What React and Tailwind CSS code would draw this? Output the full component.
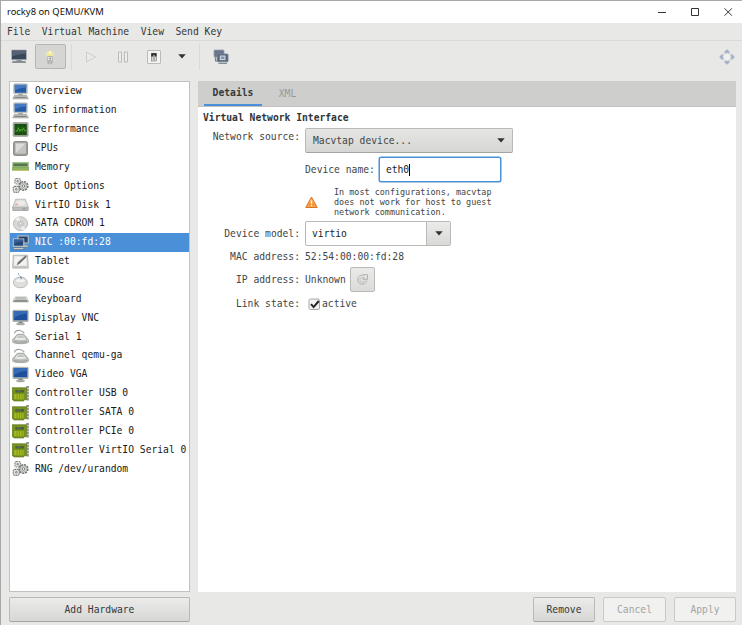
import React, { useState } from 'react';

function Svg({ className = 'h-[17px] w-[17px]', box = '0 0 17 17', children }) {
  return (
    <svg viewBox={box} className={`shrink-0 ${className}`} fill="none">
      {children}
    </svg>
  );
}

function ComputerIcon() {
  return (
    <Svg>
      <rect x="1.800" y="0.900" width="13.400" height="9.900" rx="0.7" fill="#d8dad6" stroke="#94968f" strokeWidth="0.6" />
      <rect x="2.700" y="1.800" width="11.600" height="8" fill="#255aa8" />
      <path d="M2.700 1.800h11.600v2.700C9 4.500 5.500 6 2.700 7.500z" fill="#4679c1" />
      <path d="M6.200 10.800h4.600v1.700H6.200z" fill="#a3a7a1" />
      <path d="M2.300 12.500h12.400l1.600 3.400H.8z" fill="#c9cbc6" stroke="#8d908a" strokeWidth="0.6" />
      <path d="M2.500 14.300h12" stroke="#696d67" strokeWidth="0.9" />
    </Svg>
  );
}

function DisplayIcon() {
  return (
    <Svg>
      <rect x="0.800" y="1.200" width="15.400" height="11.300" rx="0.8" fill="#b9bdb8" stroke="#858982" strokeWidth="0.5" />
      <rect x="1.700" y="2.100" width="13.600" height="9.200" fill="#1f4f9c" />
      <path d="M1.700 2.100h13.600v3C9 5 5 7 1.700 9.500z" fill="#376ab4" />
      <path d="M6.800 12.500h3.600l.6 2H6.200z" fill="#888d87" />
      <ellipse cx="8.500" cy="14.900" rx="4.200" ry="1" fill="#b2b6b0" stroke="#777b75" strokeWidth="0.4" />
    </Svg>
  );
}

function PerformanceIcon() {
  return (
    <Svg>
      <rect x="1.200" y="1.700" width="14.800" height="13.600" rx="0.6" fill="#bdbfb9" stroke="#80837b" strokeWidth="0.7" />
      <rect x="2.400" y="2.800" width="12.400" height="11.400" fill="#194d12" />
      <path d="M2.400 6.500h12.400M2.400 10.500h12.400M6 3v11M10.500 3v11" stroke="#2c6b20" strokeWidth="0.5" />
      <path d="M3.500 10h1.700l1.200-3.200 1.300 3.600 1.300-2.400 1.200 1.700 1.400-2.700 1 2.700h1.400" stroke="#55b52d" strokeWidth="0.9" />
    </Svg>
  );
}

function CpuIcon() {
  return (
    <Svg>
      <rect x="1.500" y="1.500" width="14" height="14" rx="1.800" fill="#9b9e98" stroke="#7d807a" strokeWidth="0.8" />
      <rect x="2.600" y="2.300" width="11.800" height="11.900" rx="1" fill="#c2c4c0" stroke="#8c8f89" strokeWidth="0.6" />
      <path d="M4 12.700V3.800h9z" fill="#dcdddb" />
    </Svg>
  );
}

function MemoryIcon() {
  return (
    <Svg>
      <path d="M.5 4.200h16v4.500H.5z" fill="#6f9d57" />
      <path d="M.5 4.200h16v1H.5z" fill="#a4c48c" />
      <path d="M1.800 5.900h13.400v2H1.800z" fill="#55724b" />
      <path d="M.3 9h16.400v3.400H.3z" fill="#8fb55f" stroke="#5b7d43" strokeWidth="0.4" />
      <path d="M.8 12.400h15.400" stroke="#cbc66e" strokeWidth="0.9" />
    </Svg>
  );
}

function GearsIcon() {
  return (
    <Svg>
      <g fill="#e2e3e0">
        <rect x="3" y="1.500" width="5.500" height="5.500" rx="1.400" stroke="#898c87" strokeWidth="1.200" strokeDasharray="1.600 0.6" />
        <rect x="1.300" y="9.300" width="6" height="6" rx="1.500" stroke="#7b7e79" strokeWidth="1.200" strokeDasharray="1.600 0.6" />
        <circle cx="11.500" cy="9" r="4.300" stroke="#6f736e" strokeWidth="1.600" strokeDasharray="2 0.9" />
        <circle cx="11.500" cy="9" r="3" stroke="#a0a39e" strokeWidth="0.8" />
      </g>
      <g stroke="#5d615c" fill="#fff" strokeWidth="0.8">
        <circle cx="11.500" cy="9" r="1.300" />
        <circle cx="5.700" cy="4.200" r="0.7" />
        <circle cx="4.300" cy="12.300" r="0.8" />
      </g>
    </Svg>
  );
}

function DiskIcon() {
  return (
    <Svg>
      <path d="M3.700 3.200h9.600l2.900 7.300v4H.8v-4z" fill="#dddddb" stroke="#aaaba8" strokeWidth="0.7" />
      <path d="M1 11.200h15v3.200H1z" fill="#bebfbc" stroke="#999b97" strokeWidth="0.5" />
      <ellipse cx="8.700" cy="7" rx="4.600" ry="2.600" fill="#ececea" />
      <path d="M3.200 9.300 6 7.800" stroke="#e2a297" strokeWidth="1.200" />
      <path d="M10 12.900h4.500" stroke="#878a85" strokeWidth="0.7" />
    </Svg>
  );
}

function CdromIcon() {
  return (
    <Svg>
      <circle cx="8.500" cy="8.700" r="7" fill="#d8d9d7" stroke="#adafac" strokeWidth="0.8" />
      <path d="M8.500 8.700 3.200 4a7 7 0 0 1 4-2.300zM8.500 8.700l5.200 4.800a7 7 0 0 1-4 2.100z" fill="#efefee" />
      <circle cx="8.500" cy="8.700" r="2.700" fill="#dededd" stroke="#aaacaa" strokeWidth="0.7" />
      <circle cx="8.500" cy="8.700" r="1.100" fill="#fff" stroke="#999b98" strokeWidth="0.5" />
    </Svg>
  );
}

function NetworkIcon() {
  return (
    <Svg>
      <path d="M8 11h7.500l1 2H9z" fill="#c5c7c2" stroke="#767e80" strokeWidth="0.5" />
      <rect x="6" y="2" width="10.200" height="7" fill="#22436f" stroke="#c4c8c6" strokeWidth="1" />
      <rect x="1.300" y="5" width="10.500" height="7.200" fill="#244878" stroke="#cbcdc8" strokeWidth="1" />
      <path d="M1.900 5.600h9.300v2C7 7.500 4 9 1.900 10.500z" fill="#386291" />
      <path d="M1.800 13.500h9.500l.9 2H.9z" fill="#cbccc7" stroke="#566775" strokeWidth="0.6" />
    </Svg>
  );
}

function TabletIcon() {
  return (
    <Svg>
      <path d="M1.200 2.200h14.400l.7 12.900H.7z" fill="#d9dad7" stroke="#aaaba7" strokeWidth="0.8" />
      <path d="M2.400 3.400h12v9.200H2.200z" fill="#f3f3f2" />
      <path d="m4.500 12.200 1.500-3 7.500-6.700 1.300 1.200-7.200 7z" fill="#696c68" />
      <path d="m6 9.200 7.500-6.700" stroke="#a7aaa6" strokeWidth="0.7" />
      <path d="M2 14h13" stroke="#b0b1ad" strokeWidth="0.9" />
    </Svg>
  );
}

function MouseIcon() {
  return (
    <Svg>
      <path d="M9 6C9 3 5.500 4 6.500 1" stroke="#a2a9b1" strokeWidth="0.9" />
      <path d="M1.500 10.500C1.500 7 4.300 5.200 8.300 5.200s6.900 1.900 6.900 5.300c0 3.300-2.600 5.200-6.800 5.200s-6.900-1.900-6.900-5.200z" fill="#dfdfdd" stroke="#a9aba7" strokeWidth="0.8" />
      <path d="M3.500 8.500C5 6.700 11.500 6.700 13 8.500c-1 2-8.500 2-9.500 0z" fill="#f5f5f4" />
      <path d="M7.700 4.500 9.500 4l.7 2.600-1.500 1z" fill="#8da5c5" />
    </Svg>
  );
}

function KeyboardIcon() {
  return (
    <Svg>
      <path d="M3.200 6.700h11.300l1.900 4H.9z" fill="#d4d5d2" stroke="#c2c4bf" strokeWidth="0.5" />
      <path d="M4 7.800h9.500M3.500 9h10.700" stroke="#a5a8a2" strokeWidth="0.8" strokeDasharray="2 0.2" />
      <path d="M.8 10.600h15.800v1.700H.8z" fill="#a1a49f" />
      <path d="M2.500 10.800h12.500" stroke="#696e68" strokeWidth="0.9" />
    </Svg>
  );
}

function SerialIcon() {
  return (
    <Svg>
      <path d="M2.500 5.500c.2-2.500 2.500-3.200 5-3 2.200.2 3.700.9 4.800 2.800" stroke="#999e98" strokeWidth="1.200" />
      <path d="M5.500 6.200h6.200l4.700 5.500v2.500c-2.500 2-13 2-15.700 0v-2.600z" fill="#c4c7c2" stroke="#858982" strokeWidth="0.6" />
      <path d="M5.700 7h5.600l3.600 4.500c-3 1.500-10 1.500-13 0z" fill="#e9eae7" stroke="#a1a49e" strokeWidth="0.5" />
      <path d="M4.800 9.900 6.500 7.700h4.400l1.700 2.200z" fill="#c2c5c0" />
      <path d="M2.300 13.500c3.400.9 9.500.9 12.700 0" stroke="#838780" strokeWidth="0.7" />
    </Svg>
  );
}

function CardIcon() {
  return (
    <Svg className="h-[17px] w-[18px]" box="0 0 18 17">
      <path d="M14 2h2.500" stroke="#a1a59e" strokeWidth="1.500" />
      <path d="M15.700 1v15" stroke="#8b9088" strokeWidth="2.200" strokeDasharray="2.500 0.5" />
      <path d="M.2 2.700h14.300v12h-2.700v1.300H1.700v-1.300H.2z" fill="#75931d" stroke="#576c15" strokeWidth="0.6" />
      <path d="M3.500 5h8.200v2.500H3.500z" fill="#46543a" />
      <path d="M4.500 6h5" stroke="#829078" strokeWidth="0.7" />
      <path d="M2.300 9h9.400v5.300H2.300z" fill="#a4bb22" />
      <path d="M5 9v5.300M7.500 9v5.300M10 9v5.300" stroke="#718819" strokeWidth="0.7" />
    </Svg>
  );
}

const hardware = [
  { label: 'Overview', Icon: ComputerIcon },
  { label: 'OS information', Icon: ComputerIcon },
  { label: 'Performance', Icon: PerformanceIcon },
  { label: 'CPUs', Icon: CpuIcon },
  { label: 'Memory', Icon: MemoryIcon },
  { label: 'Boot Options', Icon: GearsIcon },
  { label: 'VirtIO Disk 1', Icon: DiskIcon },
  { label: 'SATA CDROM 1', Icon: CdromIcon },
  { label: 'NIC :00:fd:28', Icon: NetworkIcon },
  { label: 'Tablet', Icon: TabletIcon },
  { label: 'Mouse', Icon: MouseIcon },
  { label: 'Keyboard', Icon: KeyboardIcon },
  { label: 'Display VNC', Icon: DisplayIcon },
  { label: 'Serial 1', Icon: SerialIcon },
  { label: 'Channel qemu-ga', Icon: SerialIcon },
  { label: 'Video VGA', Icon: DisplayIcon },
  { label: 'Controller USB 0', Icon: CardIcon },
  { label: 'Controller SATA 0', Icon: CardIcon },
  { label: 'Controller PCIe 0', Icon: CardIcon },
  { label: 'Controller VirtIO Serial 0', Icon: CardIcon },
  { label: 'RNG /dev/urandom', Icon: GearsIcon },
];

function Arrow() {
  return (
    <svg viewBox="0 0 8 5" className="h-[5px] w-2 shrink-0">
      <path d="M.3.3h7.400L4 4.500z" fill="#2e3436" />
    </svg>
  );
}

function TitleBar() {
  return (
    <div className="flex h-[22px] shrink-0 items-center justify-between bg-white pr-[9px] pl-[6px]">
      <span className="font-['Noto_Sans',sans-serif] text-[9.4px] text-[#111]">rocky8 on QEMU/KVM</span>
      <svg viewBox="0 0 76 10" className="h-[10px] w-[76px]" fill="none" stroke="#333" strokeWidth="1">
        <path d="M1 5.500h8" />
        <path d="M34.500 1.500h7v7h-7z" />
        <path d="m67.500 1.300 7.400 7.400m0-7.400-7.400 7.400" />
      </svg>
    </div>
  );
}

function Toolbar() {
  return (
    <div className="flex h-[31px] shrink-0 items-center">
      <Svg className="ml-[9px] h-[17px] w-[18px]" box="0 0 18 17">
        <rect x="1.500" y="2" width="15" height="9.800" rx="0.6" fill="#3a475b" stroke="#b2b6b9" strokeWidth="0.9" />
        <path d="M2.200 2.700h13.600v3C10 5.500 6 7 2.200 8.500z" fill="#556276" />
        <path d="M6.500 11.800h5v1.500h-5z" fill="#8b9096" />
        <path d="M2.800 13.200h12.400l1 1.600H1.800z" fill="#6b737b" />
      </Svg>
      <div className="ml-[7px] flex h-[25px] w-[31px] items-center justify-center rounded-[2px] border border-[#b5b5b2] bg-[#d5d5d3]">
        <Svg className="mr-[2px] h-[18px] w-[14px]" box="0 0 14 18">
          <ellipse cx="7" cy="5.800" rx="4.500" ry="2.600" fill="#e6e4c0" />
          <path d="M4.300 5C4.800 3.500 5.700 3 7 3s2.200.5 2.700 2L9 8H5z" fill="#f0ea91" />
          <path d="M5.800 3.500h2.400v2H5.800z" fill="#fffbe0" />
          <path d="M4.800 8.500h4.500v6.700c-1 .8-3.500.8-4.500 0z" fill="#f0f0ed" stroke="#9fa19d" strokeWidth="0.7" />
          <path d="M5 12h4v3c-1 .7-3 .7-4 0z" fill="#b7b9b5" />
          <path d="M6.500 9.500h1.300v2H6.500z" fill="#777b78" />
        </Svg>
      </div>
      <div className="ml-[5px] h-[26px] w-px bg-[#dadad8]" />
      <Svg className="ml-[13px] h-[12px] w-[12px]" box="0 0 12 12">
        <path d="m1.500 1 9 5-9 5z" fill="#eaeae8" stroke="#c9c9c5" strokeWidth="0.9" />
      </Svg>
      <Svg className="ml-[20px] h-[12px] w-[12px]" box="0 0 12 12">
        <path d="M1.500 1h3v10h-3zM7.500 1h3v10h-3z" fill="#eee" stroke="#b6b7b3" strokeWidth="0.9" />
      </Svg>
      <Svg className="ml-[17px] h-[16px] w-[16px]" box="0 0 16 16">
        <rect x="1.500" y="1.500" width="13" height="13" rx="0.5" fill="#f4f4f2" stroke="#adaeaa" strokeWidth="0.8" />
        <rect x="5.300" y="4.200" width="5" height="7.800" fill="#d6d7d4" stroke="#777a75" strokeWidth="0.6" />
        <path d="M5.300 4.200h5.200v3.300H5.300z" fill="#2c2f2e" />
        <path d="M7.200 6h1.600v5H7.200z" fill="#a5a8a3" />
      </Svg>
      <div className="ml-[16px]"><Arrow /></div>
      <div className="ml-[13px] h-[26px] w-px bg-[#dadad8]" />
      <Svg className="ml-[12px] h-[17px] w-[17px]">
        <rect x="2" y="2" width="10" height="7" rx="0.7" fill="#69768a" stroke="#98a2ae" strokeWidth="0.8" />
        <path d="M3.500 9v4h2" stroke="#78838f" strokeWidth="1.200" />
        <rect x="5.200" y="6" width="10.800" height="7.700" rx="0.7" fill="#53647d" stroke="#778596" strokeWidth="0.9" />
        <rect x="8.200" y="8" width="4.800" height="3.700" fill="#8495ac" stroke="#e2e6eb" strokeWidth="0.9" />
        <path d="M6.500 15.300h8.500" stroke="#7b858f" strokeWidth="1.200" />
      </Svg>
      <Svg className="mr-[6px] ml-auto h-[18px] w-[18px]" box="0 0 18 18">
        <path d="m9 3.500 5.500 5.500L9 14.500 3.500 9z" fill="#efefee" stroke="#c5c8ca" />
        <path d="M9 1.200 12 4l-1.500 1.200h-3L6 4zM9 16.800 12 14l-1.500-1.200h-3L6 14zM1.200 9 4 6l1.200 1.500v3L4 12zM16.800 9 14 6l-1.200 1.500v3L14 12z" fill="#a5b3cb" />
      </Svg>
    </div>
  );
}

function HardwareList({ selected, onSelect }) {
  return (
    <div className="min-h-0 flex-1 border border-[#c1c1bd] bg-white text-[#181818]">
      {hardware.map(({ label, Icon }, i) => (
        <div
          key={label}
          onClick={() => onSelect(i)}
          className={`flex h-[18.87px] cursor-default items-center pl-[2px] whitespace-pre ${
            i === selected ? 'bg-[#4a90d9] text-white' : ''
          }`}
        >
          <span className="flex w-[23px] shrink-0"><Icon /></span>
          {label}
        </div>
      ))}
    </div>
  );
}

function Button({ disabled, className, children }) {
  return (
    <button
      disabled={disabled}
      className={`h-[25px] rounded-[2px] border ${
        disabled
          ? 'border-[#c9c9c6] bg-[#f1f1f0] text-[#a2a5a4]'
          : 'border-[#b9b9b6] border-b-[#a3a3a0] bg-linear-to-b from-[#ebebea] to-[#d7d7d5] text-[#353a3b]'
      } ${className}`}
    >
      {children}
    </button>
  );
}

function Label({ className = '', children }) {
  return <span className={`w-[102px] shrink-0 text-right ${className}`}>{children}</span>;
}

function NicDetails() {
  return (
    <div className="flex flex-col text-[#414647]">
      <h2 className="mt-[4px] ml-[5px] h-[14px] font-bold leading-[14px] text-[#303536]">Virtual Network Interface</h2>
      <div className="mt-[3px] flex gap-[5px]">
        <Label className="pt-[2px]">Network source:</Label>
        <div className="flex h-[25px] w-[208px] items-center justify-between rounded-[2px] border border-[#b9b9b6] border-b-[#a3a3a0] bg-linear-to-b from-[#e6e6e5] to-[#d6d6d4] pr-[7px] pl-[7px]">
          Macvtap device...
          <Arrow />
        </div>
      </div>
      <div className="mt-[4px] ml-[107px] flex items-center gap-[4px]">
        <span>Device name:</span>
        <div className="flex h-[25px] w-[122px] items-center rounded-[2px] border border-[#4a90d9] bg-white pl-[6px] text-[#202526] ring-[0.5px] ring-[#4a90d9]">
          eth0
          <span className="h-[12px] w-px bg-black" />
        </div>
      </div>
      <div className="mt-[5px] ml-[107px] flex h-[30px] items-center">
        <Svg className="h-[13px] w-[13px]" box="0 0 13 13">
          <path d="M6.500 1 12.200 11.500H.8z" fill="#f68b25" stroke="#d97522" strokeWidth="1" strokeLinejoin="round" />
          <path d="M6.500 2.800 10.500 10.500h-8z" stroke="#fac08b" strokeWidth="0.5" />
          <path d="M6.500 4.500v3.300M6.500 8.800V10" stroke="#fff" strokeWidth="1.500" />
        </Svg>
        <p className="ml-[16px] text-[8.45px] leading-[10.2px] whitespace-nowrap">
          In most configurations, macvtap
          <br />
          does not work for host to guest
          <br />
          network communication.
        </p>
      </div>
      <div className="mt-[4px] flex items-center gap-[5px]">
        <Label>Device model:</Label>
        <div className="flex h-[25px] w-[146px] rounded-[2px] border border-[#b9b9b6] bg-white text-[#202526]">
          <span className="flex flex-1 items-center pl-[6px]">virtio</span>
          <span className="flex w-[24px] items-center justify-center border-l border-[#b9b9b6] bg-linear-to-b from-[#ebebea] to-[#d9d9d7]">
            <Arrow />
          </span>
        </div>
      </div>
      <div className="mt-[4px] flex h-[14px] items-center gap-[5px]">
        <Label>MAC address:</Label>
        <span>52:54:00:00:fd:28</span>
      </div>
      <div className="mt-[3px] flex items-center gap-[5px]">
        <Label>IP address:</Label>
        <span>Unknown</span>
        <div className="-ml-px flex size-[25px] items-center justify-center rounded-[2px] border border-[#b9b9b6] bg-linear-to-b from-[#eaeae9] to-[#dbdbda]">
          <Svg className="h-[13px] w-[13px]" box="0 0 13 13">
            <path d="M10.800 7.500A4.600 4.600 0 1 1 7.500 2.300M7 1.800h4.500v4.500H7V4.700h1.500" stroke="#aaaba8" strokeWidth="0.9" />
            <path d="M8.700 7.500a2.500 2.500 0 1 1-2.500-3" stroke="#b6b7b4" strokeWidth="0.8" />
          </Svg>
        </div>
      </div>
      <div className="mt-[5px] flex h-[14px] items-center">
        <Label>Link state:</Label>
        <Svg className="ml-[8px] h-[13px] w-[13px]" box="0 0 13 13">
          <rect x="1" y="1" width="10.500" height="10.500" rx="1.500" fill="#f3f3f2" stroke="#a7a8a5" />
          <path d="m3 6.200 2.600 2.900L10.800 3" stroke="#202526" strokeWidth="2" />
        </Svg>
        <span className="ml-[1px]">active</span>
      </div>
    </div>
  );
}

function App() {
  const [selected, setSelected] = useState(8);

  return (
    <div className="flex h-[625px] w-[742px] flex-col overflow-hidden border-t border-l border-[#a7a7a7] bg-[#e8e8e7] font-['DejaVu_Sans_Mono',monospace] text-[9.68px] leading-[14px]">
      <TitleBar />
      <div className="flex h-[18px] shrink-0 items-center gap-[11.5px] border-b border-[#dadad8] pt-px pl-[6px] text-[#343839]">
        <span>File</span>
        <span>Virtual Machine</span>
        <span>View</span>
        <span>Send Key</span>
      </div>
      <Toolbar />
      <div className="mt-[9px] flex h-[541px] shrink-0 gap-[8px] pl-[8px]">
        <div className="flex w-[181px] flex-col">
          <HardwareList selected={selected} onSelect={setSelected} />
          <Button className="mt-[5px]">Add Hardware</Button>
        </div>
        <div className="flex w-[538px] flex-col">
          <div className="flex min-h-0 flex-1 flex-col bg-white">
            <div className="flex h-[26px] shrink-0 border-b border-[#c0c0bd] bg-[#cececd] pl-[6px]">
              <div className="flex w-[58px] items-center justify-center border-b-2 border-[#4a90d9] pt-px font-bold text-[#353a3b]">
                Details
              </div>
              <div className="flex w-[51px] items-center justify-center text-[#969998]">XML</div>
            </div>
            <NicDetails />
          </div>
          <div className="mt-[5px] flex justify-end gap-[8px]">
            <Button className="w-[62px]">Remove</Button>
            <Button disabled className="w-[63px]">Cancel</Button>
            <Button disabled className="w-[62px]">Apply</Button>
          </div>
        </div>
      </div>
    </div>
  );
}

export default App;
